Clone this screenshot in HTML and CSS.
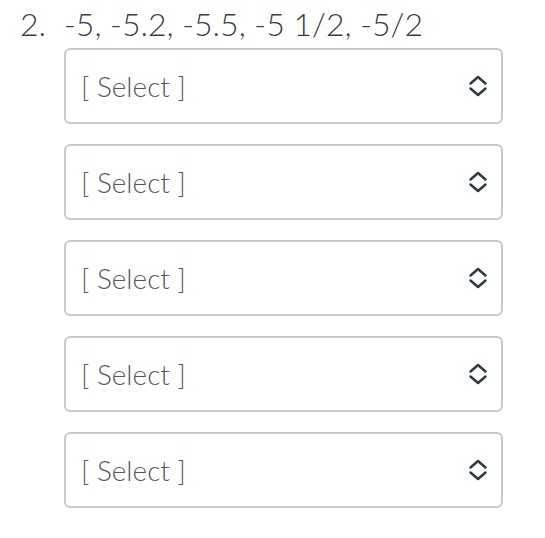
FILE: index.html
```html
<!DOCTYPE html>
<html>
<head>
<meta charset="utf-8">
<link rel="stylesheet" href="styles.css">
</head>
<body>
<div class="question">
  <div class="prompt"><span class="num">2.</span><span class="values">-5, -5.2, -5.5, -5 1/2, -5/2</span></div>
  <div class="selects">
    <div class="select"><span class="placeholder">[ Select ]</span><svg class="chev" width="20" height="22" viewBox="0 0 20 22"><path d="M2.5 8.5 L10 2 L17.5 8.5 M2.5 13.5 L10 20 L17.5 13.5" fill="none" stroke="#2d3b45" stroke-width="2.5" stroke-linecap="round" stroke-linejoin="round"/></svg></div>
    <div class="select"><span class="placeholder">[ Select ]</span><svg class="chev" width="20" height="22" viewBox="0 0 20 22"><path d="M2.5 8.5 L10 2 L17.5 8.5 M2.5 13.5 L10 20 L17.5 13.5" fill="none" stroke="#2d3b45" stroke-width="2.5" stroke-linecap="round" stroke-linejoin="round"/></svg></div>
    <div class="select"><span class="placeholder">[ Select ]</span><svg class="chev" width="20" height="22" viewBox="0 0 20 22"><path d="M2.5 8.5 L10 2 L17.5 8.5 M2.5 13.5 L10 20 L17.5 13.5" fill="none" stroke="#2d3b45" stroke-width="2.5" stroke-linecap="round" stroke-linejoin="round"/></svg></div>
    <div class="select"><span class="placeholder">[ Select ]</span><svg class="chev" width="20" height="22" viewBox="0 0 20 22"><path d="M2.5 8.5 L10 2 L17.5 8.5 M2.5 13.5 L10 20 L17.5 13.5" fill="none" stroke="#2d3b45" stroke-width="2.5" stroke-linecap="round" stroke-linejoin="round"/></svg></div>
    <div class="select"><span class="placeholder">[ Select ]</span><svg class="chev" width="20" height="22" viewBox="0 0 20 22"><path d="M2.5 8.5 L10 2 L17.5 8.5 M2.5 13.5 L10 20 L17.5 13.5" fill="none" stroke="#2d3b45" stroke-width="2.5" stroke-linecap="round" stroke-linejoin="round"/></svg></div>
  </div>
</div>
</body>
</html>
```

FILE: styles.css
```css
html, body {
  margin: 0;
  padding: 0;
  background: #ffffff;
}
body {
  font-family: Lato, "Open Sans", sans-serif;
  font-weight: 300;
}
.question {
  padding: 4px 0 0 20px;
}
.prompt {
  display: flex;
  font-size: 32px;
  line-height: 40px;
  color: #3a3f44;
}
.num {
  width: 44px;
}
.selects {
  margin: 4px 0 0 44px;
  width: 439px;
  display: flex;
  flex-direction: column;
  gap: 20px;
}
.select {
  box-sizing: border-box;
  height: 76px;
  border: 2px solid #c7c9cb;
  border-radius: 6px;
  display: flex;
  align-items: center;
  justify-content: space-between;
  padding: 0 13px 0 15px;
}
.placeholder {
  font-size: 28px;
  color: #55595d;
}
.chev {
  display: block;
}
```
